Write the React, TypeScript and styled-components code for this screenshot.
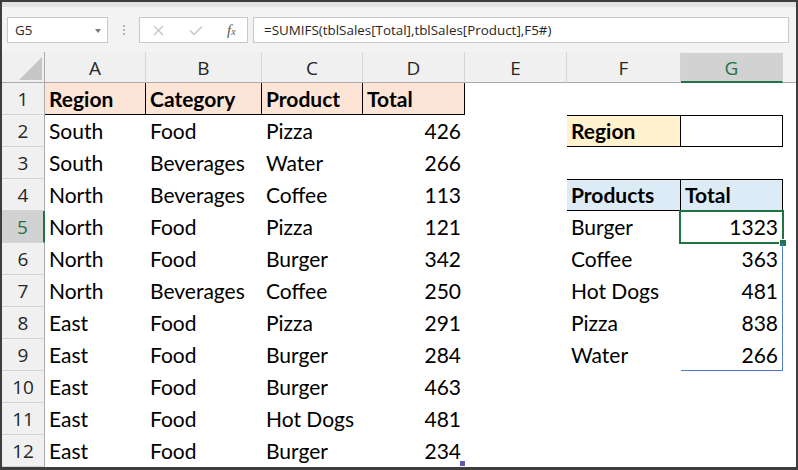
import React from 'react'
import styled, { createGlobalStyle, css } from 'styled-components'

const GlobalStyle = createGlobalStyle`
  html, body {
    margin: 0;
    padding: 0;
    background: #fff;
  }
`

type CellKind = 'plain' | 'num' | 'head' | 'label' | 'input' | 'tblHead' | 'spill'

interface CellData {
  v?: string,
  kind?: CellKind,
  active?: boolean,
  last?: boolean,
  handle?: boolean,
}

const COLS = ['A', 'B', 'C', 'D', 'E', 'F', 'G', '']

const summary: Record<number, [CellData, CellData]> = {
  2: [{ v: 'Region', kind: 'label' }, { kind: 'input' }],
  4: [{ v: 'Products', kind: 'tblHead' }, { v: 'Total', kind: 'tblHead' }],
  5: [{ v: 'Burger' }, { v: '1323', kind: 'spill', active: true }],
  6: [{ v: 'Coffee' }, { v: '363', kind: 'spill' }],
  7: [{ v: 'Hot Dogs' }, { v: '481', kind: 'spill' }],
  8: [{ v: 'Pizza' }, { v: '838', kind: 'spill' }],
  9: [{ v: 'Water' }, { v: '266', kind: 'spill', last: true }],
}

const sales = [
  ['South', 'Food', 'Pizza', '426'],
  ['South', 'Beverages', 'Water', '266'],
  ['North', 'Beverages', 'Coffee', '113'],
  ['North', 'Food', 'Pizza', '121'],
  ['North', 'Food', 'Burger', '342'],
  ['North', 'Beverages', 'Coffee', '250'],
  ['East', 'Food', 'Pizza', '291'],
  ['East', 'Food', 'Burger', '284'],
  ['East', 'Food', 'Burger', '463'],
  ['East', 'Food', 'Hot Dogs', '481'],
  ['East', 'Food', 'Burger', '234'],
]

const buildRows = (): CellData[][] => {
  const rows: CellData[][] = []
  rows.push([
    ...['Region', 'Category', 'Product', 'Total'].map((v) => ({ v, kind: 'head' as CellKind })),
    {}, {}, {}, {},
  ])
  sales.forEach((r, i) => {
    const n = i + 2
    const side = summary[n] || [{}, {}]
    rows.push([
      { v: r[0] }, { v: r[1] }, { v: r[2] },
      { v: r[3], kind: 'num', handle: n === 12 },
      {},
      side[0], side[1],
      {},
    ])
  })
  return rows
}

const App: React.FC = () => {
  const rows = buildRows()
  return (
    <>
      <GlobalStyle />
      <Window>
        <FormulaBar>
          <NameBox>
            <span>G5</span>
            <DropArrow />
          </NameBox>
          <Grip>
            <i /><i /><i />
          </Grip>
          <ButtonBox>
            <svg width="11" height="11" viewBox="0 0 11 11">
              <path d="M1 1 L10 10 M10 1 L1 10" stroke="#c4c4c4" strokeWidth="1.3" fill="none" />
            </svg>
            <svg width="14" height="11" viewBox="0 0 14 11">
              <path d="M1 5.5 L5 9.5 L13 1.5" stroke="#c4c4c4" strokeWidth="1.4" fill="none" />
            </svg>
            <Fx>f<sub>x</sub></Fx>
          </ButtonBox>
          <FormulaInput>=SUMIFS(tblSales[Total],tblSales[Product],F5#)</FormulaInput>
        </FormulaBar>

        <Sheet>
          <Corner>
            <svg width="23" height="23" viewBox="0 0 23 23">
              <polygon points="23,0 23,23 0,23" fill="#c6c6c6" />
            </svg>
          </Corner>
          {COLS.map((c) => (
            <ColHeader key={c || 'H'} $selected={c === 'G'} $tail={c === ''}>{c}</ColHeader>
          ))}
          {rows.map((row, ri) => (
            <React.Fragment key={ri}>
              <RowHeader $selected={ri + 1 === 5}>{ri + 1}</RowHeader>
              {row.map((cell, ci) => (
                <Cell
                  key={ci}
                  $kind={cell.kind || 'plain'}
                  $last={!!cell.last}
                  $handle={!!cell.handle}
                >
                  {cell.v}
                  {cell.active && <ActiveOutline><FillHandle /></ActiveOutline>}
                </Cell>
              ))}
            </React.Fragment>
          ))}
        </Sheet>
      </Window>
    </>
  )
}

const Window = styled.div`
  width: 798px;
  height: 470px;
  box-sizing: border-box;
  border: 2px solid #3d3d3d;
  border-bottom-width: 3px;
  background: #fff;
  overflow: hidden;
  display: flex;
  flex-direction: column;
`

const FormulaBar = styled.div`
  height: 50px;
  flex: none;
  box-sizing: border-box;
  background: #f3f3f3;
  border-top: 5px solid #e2e2e2;
  padding: 10px 7px 0 5px;
  display: flex;
  align-items: flex-start;
  font-family: 'Open Sans', 'Noto Sans', sans-serif;
  font-size: 13.4px;
  color: #262626;
`

const boxBase = css`
  height: 26px;
  box-sizing: border-box;
  background: #fff;
  border: 1px solid #c8c8c8;
  display: flex;
  align-items: center;
`

const NameBox = styled.div`
  ${boxBase};
  width: 101px;
  padding: 0 6px 0 7px;
  justify-content: space-between;
`

const DropArrow = styled.span`
  width: 0;
  height: 0;
  border-left: 3.5px solid transparent;
  border-right: 3.5px solid transparent;
  border-top: 4px solid #7a7a7a;
  margin-top: 1px;
`

const Grip = styled.div`
  width: 31px;
  height: 26px;
  display: flex;
  flex-direction: column;
  align-items: center;
  justify-content: center;
  gap: 2px;

  i {
    width: 2px;
    height: 2px;
    background: #b4b4b4;
  }
`

const ButtonBox = styled.div`
  ${boxBase};
  width: 109px;
  padding: 0 0 0 13px;
  gap: 25px;
`

const Fx = styled.span`
  font-family: 'Liberation Serif', 'DejaVu Serif', serif;
  font-style: italic;
  font-size: 15px;
  color: #5a5a5a;
  margin-left: -1px;

  sub {
    font-size: 10px;
    vertical-align: 0;
    margin-left: 0;
  }
`

const FormulaInput = styled.div`
  ${boxBase};
  flex: 1;
  margin-left: 5px;
  padding-left: 10px;
  white-space: nowrap;
`

const Sheet = styled.div`
  flex: 1;
  display: grid;
  grid-template-columns: 43px 101px 116px 101px 102px 102px 114px 102px 1fr;
  grid-template-rows: 31px;
  grid-auto-rows: 32px;
  background: #fff;
`

const headerBase = css`
  background: #f0f0f0;
  font-family: 'Open Sans', 'Noto Sans', sans-serif;
  font-size: 19px;
  color: #262626;
  display: flex;
  align-items: center;
  justify-content: center;
  box-sizing: border-box;
`

const Corner = styled.div`
  ${headerBase};
  border-right: 1px solid #ababab;
  border-bottom: 1px solid #ababab;
  align-items: flex-end;
  justify-content: flex-end;
  padding: 0 2px 2px 0;
`

const ColHeader = styled.div<{ $selected: boolean, $tail: boolean }>`
  ${headerBase};
  border-top: 1px solid #f0f0f0;
  border-right: 1px solid #d4d4d4;
  border-bottom: 1px solid #ababab;
  padding-top: 1px;
  ${({ $tail }) => $tail && css`
    border-right: none;
    background: #f3f3f3;
  `}
  ${({ $selected }) => $selected && css`
    background: #d2d2d2;
    color: #217346;
    border-bottom: 2px solid #217346;
    padding-top: 2px;
  `}
`

const RowHeader = styled.div<{ $selected: boolean }>`
  ${headerBase};
  border-right: 1px solid #ababab;
  border-bottom: 1px solid #d4d4d4;
  ${({ $selected }) => $selected && css`
    background: #d2d2d2;
    color: #217346;
    border-right: 2px solid #217346;
  `}
`

const kindStyles: Record<CellKind, ReturnType<typeof css> | string> = {
  plain: '',
  num: css`justify-content: flex-end;`,
  head: css`
    background: #fce4d6;
    font-weight: 700;
    border-right: 1px solid #000;
    border-bottom: 1px solid #000;
  `,
  label: css`
    background: #fff2cc;
    font-weight: 700;
    border: 1px solid #000;
  `,
  input: css`
    border: 1px solid #000;
    border-left: none;
  `,
  tblHead: css`
    background: #ddebf7;
    font-weight: 700;
    border: 1px solid #000;
  `,
  spill: css`
    justify-content: flex-end;
    border-left: 1px solid #4f7fc0;
    border-right: 1px solid #4f7fc0;
  `,
}

const Cell = styled.div<{ $kind: CellKind, $last: boolean, $handle: boolean }>`
  position: relative;
  box-sizing: border-box;
  display: flex;
  align-items: center;
  padding: 0 4px 1px 4px;
  font-family: Lato, 'Open Sans', sans-serif;
  font-size: 21px;
  color: #000;
  white-space: nowrap;
  ${({ $kind }) => kindStyles[$kind]};
  ${({ $kind }) => $kind === 'tblHead' && css`
    & + & { border-left: none; }
  `}
  ${({ $last }) => $last && css`border-bottom: 1px solid #4f7fc0;`}
  ${({ $handle }) => $handle && css`
    &::after {
      content: '';
      position: absolute;
      right: 0;
      bottom: 1px;
      width: 5px;
      height: 5px;
      background: #5b5bb0;
    }
  `}
`

const ActiveOutline = styled.span`
  position: absolute;
  top: -1px;
  left: -2px;
  right: -2px;
  bottom: -1px;
  border: 2px solid #217346;
  pointer-events: none;
`

const FillHandle = styled.span`
  position: absolute;
  right: -5px;
  bottom: -5px;
  width: 6px;
  height: 6px;
  background: #217346;
  border: 1px solid #fff;
`

export default App
